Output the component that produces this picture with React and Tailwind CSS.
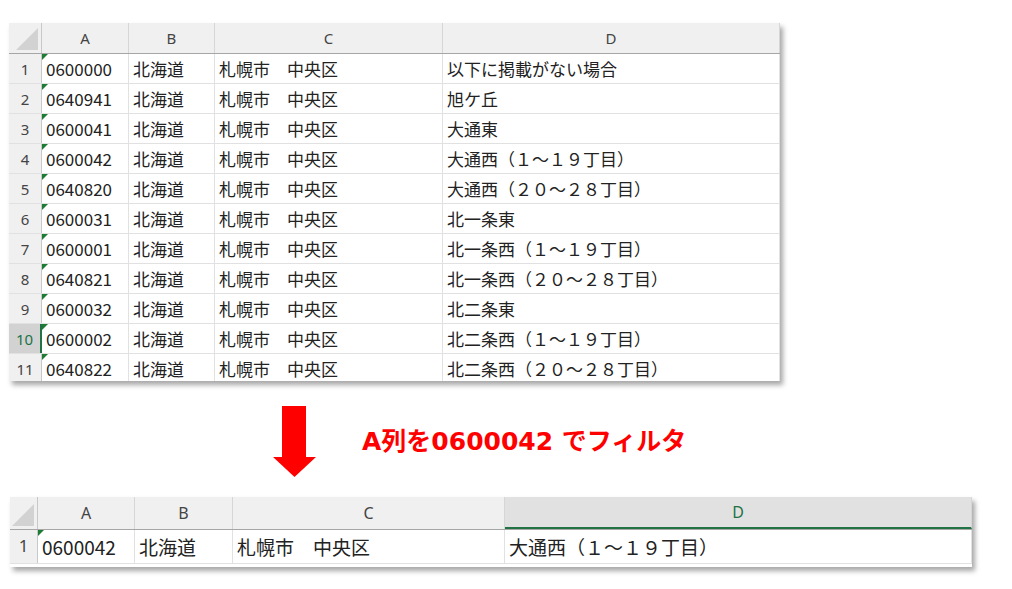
import React from 'react';

const topRows = [
  ['0600000', '北海道', '札幌市　中央区', '以下に掲載がない場合'],
  ['0640941', '北海道', '札幌市　中央区', '旭ケ丘'],
  ['0600041', '北海道', '札幌市　中央区', '大通東'],
  ['0600042', '北海道', '札幌市　中央区', '大通西（１～１９丁目）'],
  ['0640820', '北海道', '札幌市　中央区', '大通西（２０～２８丁目）'],
  ['0600031', '北海道', '札幌市　中央区', '北一条東'],
  ['0600001', '北海道', '札幌市　中央区', '北一条西（１～１９丁目）'],
  ['0640821', '北海道', '札幌市　中央区', '北一条西（２０～２８丁目）'],
  ['0600032', '北海道', '札幌市　中央区', '北二条東'],
  ['0600002', '北海道', '札幌市　中央区', '北二条西（１～１９丁目）'],
  ['0640822', '北海道', '札幌市　中央区', '北二条西（２０～２８丁目）'],
];

const cellFont = { fontFamily: '"Noto Sans CJK JP", "Noto Sans", sans-serif' };
const headFont = { fontFamily: '"Noto Sans", sans-serif' };

// little green "number stored as text" flag
const Flag = () => (
  <span className="absolute left-0 top-0 w-0 h-0 border-t-[6px] border-r-[6px] border-t-[#1e7b34] border-r-transparent" />
);

// select-all corner with its grey triangle
const Corner = ({ w, h }) => (
  <div className="shrink-0 flex items-end justify-end pr-[3px] pb-[3px] border-r border-[#c8c8c8] bg-[#f0f0f0]" style={{ width: w, height: h }}>
    <svg width="22" height="22" viewBox="0 0 22 22" className="block shrink-0">
      <path d="M0 22 L22 0 L22 22 Z" fill="#d2d2d2" />
    </svg>
  </div>
);

const TopSheet = () => {
  const widths = [33, 87, 86, 228, 337];
  const letters = ['A', 'B', 'C', 'D'];
  return (
    <div className="w-[771px] h-[358px] overflow-hidden bg-white shadow-[3px_4px_5px_rgba(0,0,0,0.35)]">
      <div className="flex h-[31px] bg-[#f0f0f0] border-b border-[#a6a6a6]">
        <Corner w={widths[0]} h={30} />
        {letters.map((l, i) => (
          <div
            key={l}
            className="shrink-0 flex items-center justify-center border-r border-[#d6d6d6] text-[15px] text-[#444]"
            style={{ width: widths[i + 1], ...headFont }}
          >
            {l}
          </div>
        ))}
      </div>
      {topRows.map((row, r) => {
        const active = r === 9;
        return (
          <div key={r} className="flex h-[30px] border-b border-[#e1e1e1]">
            <div
              className={`shrink-0 flex items-end justify-center pb-[3px] text-[15px] ${active ? 'bg-[#d2d2d2] text-[#217346] border-r-2 border-[#217346]' : 'bg-[#f0f0f0] text-[#444] border-r border-[#c8c8c8]'}`}
              style={{ width: widths[0], ...headFont }}
            >
              {r + 1}
            </div>
            {row.map((v, c) => (
              <div
                key={c}
                className="relative shrink-0 flex items-center pl-[4px] pt-[1px] text-[17px] text-[#222] border-r border-[#e1e1e1] whitespace-pre"
                style={{ width: widths[c + 1], ...cellFont }}
              >
                {c === 0 && <Flag />}
                {v}
              </div>
            ))}
          </div>
        );
      })}
    </div>
  );
};

const BottomSheet = () => {
  const widths = [28, 97, 98, 272, 467];
  const letters = ['A', 'B', 'C', 'D'];
  const row = ['0600042', '北海道', '札幌市　中央区', '大通西（１～１９丁目）'];
  return (
    <div className="w-[962px] h-[70px] overflow-hidden bg-white shadow-[3px_4px_5px_rgba(0,0,0,0.35)]">
      <div className="flex h-[33px] bg-[#f0f0f0] border-b border-[#a6a6a6]">
        <Corner w={widths[0]} h={32} />
        {letters.map((l, i) => {
          const sel = l === 'D';
          return (
            <div
              key={l}
              className={`shrink-0 flex items-center justify-center text-[16px] border-r border-[#d6d6d6] ${sel ? 'bg-[#e1e1e1] text-[#217346] border-b-2 border-b-[#217346]' : 'text-[#444]'}`}
              style={{ width: widths[i + 1], ...headFont }}
            >
              {l}
            </div>
          );
        })}
      </div>
      <div className="flex h-[34px] border-b border-[#e1e1e1]">
        <div
          className="shrink-0 flex items-end justify-center pb-[5px] text-[17px] text-[#444] bg-[#f0f0f0] border-r border-[#c8c8c8]"
          style={{ width: widths[0], ...headFont }}
        >
          1
        </div>
        {row.map((v, c) => (
          <div
            key={c}
            className="relative shrink-0 flex items-center pl-[4px] pt-[1px] text-[19px] text-[#222] border-r border-[#e1e1e1] whitespace-pre"
            style={{ width: widths[c + 1], ...cellFont }}
          >
            {c === 0 && <Flag />}
            {v}
          </div>
        ))}
      </div>
    </div>
  );
};

export default function App() {
  return (
    <div className="w-[1012px] h-[589px] bg-white pt-[23px] pl-[9px] overflow-hidden">
      <TopSheet />

      <div className="flex items-center mt-[25px] ml-[264px]">
        <svg width="43" height="71" viewBox="0 0 43 71">
          <rect x="9" y="0" width="24" height="51" fill="#ff0000" />
          <polygon points="0,51 43,51 21.5,71" fill="#ff0000" />
        </svg>
        <span
          className="ml-[46px] text-[25px] font-bold text-[#ff0000] leading-none"
          style={{ fontFamily: '"DejaVu Sans", "Noto Sans CJK JP", sans-serif' }}
        >
          A列を0600042 でフィルタ
        </span>
      </div>

      <div className="mt-[20px] ml-px">
        <BottomSheet />
      </div>
    </div>
  );
}
